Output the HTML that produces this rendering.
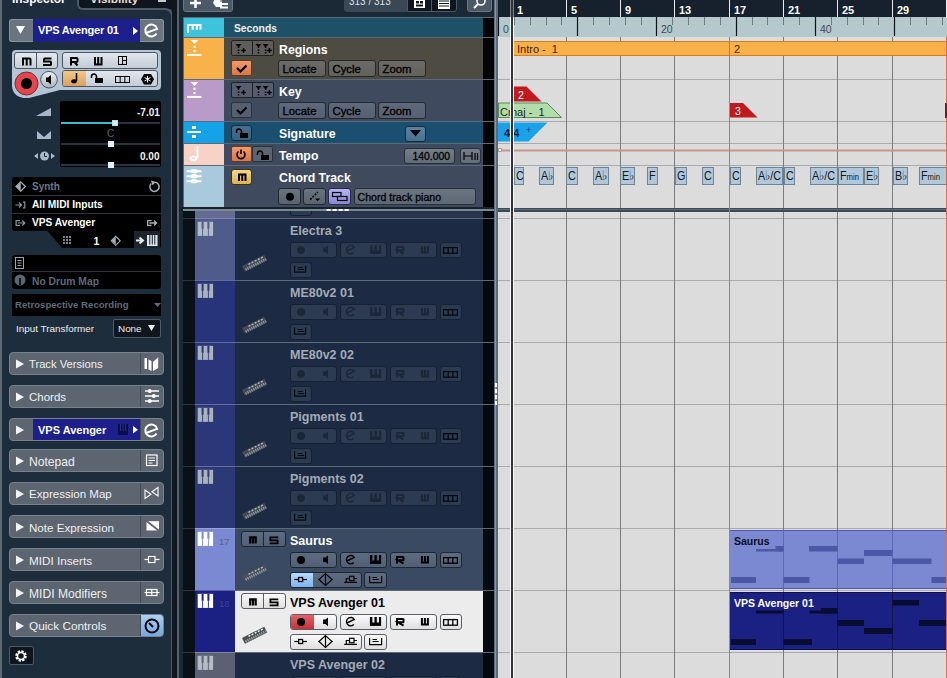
<!DOCTYPE html><html><head><meta charset="utf-8"><style>
html,body{margin:0;padding:0;width:947px;height:678px;overflow:hidden;background:#1e2d3c;font-family:"Liberation Sans",sans-serif;}
div{position:absolute;box-sizing:border-box;}
.t{white-space:nowrap;line-height:1;}
svg{position:absolute;overflow:visible}
</style></head><body>
<div style="left:0px;top:0px;width:172px;height:678px;background:#1e2d3c"></div>
<div style="left:0px;top:0px;width:2px;height:678px;background:#5b6671"></div>
<div class="t" style="left:12px;top:-6.5px;font-size:11.9px;color:#fff;font-weight:bold;">Inspector</div>
<div style="left:79px;top:0px;width:93px;height:9px;background:#0f151d"></div>
<div style="left:77px;top:-4px;width:20px;height:14px;background:#0f151d;border-left:2px solid #4e5a65;border-bottom:2px solid #4e5a65;border-bottom-left-radius:6px"></div>
<div class="t" style="left:90px;top:-6.5px;font-size:11.8px;color:#e8dcd0;font-weight:bold;">Visibility</div>
<div style="left:158px;top:0px;width:8px;height:2px;background:#c8ccd0"></div>
<div style="left:90px;top:8px;width:83px;height:680px;border-top:2px solid #4e5a65;border-right:2px solid #4e5a65;border-top-right-radius:8px"></div>
<div style="left:172px;top:0px;width:6px;height:678px;background:#0f1720"></div>
<div style="left:177px;top:0px;width:2px;height:678px;background:#56616c"></div>
<div style="left:9px;top:19px;width:25px;height:23px;background:#6b7580;border:1px solid #8a949e;border-right:0;border-radius:3px 0 0 3px"></div>
<svg style="left:16px;top:26px" width="10" height="9"><path d="M0 0H9L4.5 8Z" fill="#fff"/></svg>
<div style="left:33px;top:19px;width:107px;height:23px;background:#1c1f8c"></div>
<div class="t" style="left:38px;top:25px;font-size:11px;color:#fff;font-weight:bold;letter-spacing:-0.2px">VPS Avenger 01</div>
<svg style="left:133px;top:27px" width="6" height="8"><path d="M0 0L5 4L0 8Z" fill="#fff"/></svg>
<div style="left:140px;top:19px;width:24px;height:23px;background:#6b7580;border:1px solid #8a949e;border-left:0;border-radius:0 3px 3px 0"></div>
<svg style="left:0;top:0" width="172" height="50"><path d="M145.9 33 L157.1 28.9 A6 6 0 1 0 156.5 33.5" fill="none" stroke="#fff" stroke-width="2"/></svg>
<svg style="left:0;top:0" width="172" height="110"><path d="M16 50 H157 Q161 50 161 54 V86 Q161 90 157 90 H60 L29 98 Q13 99 12 86 V54 Q12 50 16 50Z" fill="#b5c5d5"/></svg>
<div style="left:14px;top:52px;width:44px;height:17px;background:linear-gradient(#e6eaf0,#c5ced8);border:1px solid #4d565e;border-radius:3px"></div>
<div style="left:36px;top:53px;width:1px;height:15px;background:#4d565e"></div>
<svg style="left:0;top:0" width="60" height="70"><path d="M23 65.5V58.5H29.5Q30.5 58.5 30.5 59.5V65.5M26.7 58.5V65.5" fill="none" stroke="#000" stroke-width="2"/><path d="M51.5 58.5H45Q44 58.5 44 59.5V61.5H50.5Q51 61.5 51 62.5V64.5Q51 65 50.5 65H43" fill="none" stroke="#000" stroke-width="2"/></svg>
<svg style="left:0;top:0" width="172" height="110"><circle cx="26.5" cy="83.5" r="11.5" fill="#e2474e" stroke="#7a2a30" stroke-width="1"/><circle cx="26.5" cy="83.5" r="5.5" fill="#000"/><defs><linearGradient id="gm" x1="0" y1="0" x2="0" y2="1"><stop offset="0" stop-color="#f0f2f5"/><stop offset="1" stop-color="#a8b2bc"/></linearGradient></defs><circle cx="49" cy="79.7" r="8.3" fill="url(#gm)" stroke="#4d565e" stroke-width="1"/><path d="M46 77.5H48L51 75V84.5L48 82H46Z" fill="#000"/></svg>
<div style="left:62px;top:52px;width:96px;height:17px;background:linear-gradient(#e2e7ee,#c3ccd7);border:1px solid #4d565e;border-radius:3px"></div>
<svg style="left:0;top:0" width="160" height="70"><path d="M71 65.5V58H76.5Q77.5 58 77.5 59V61Q77.5 62 76.5 62H71M74.5 62L77.5 65.5" fill="none" stroke="#000" stroke-width="2"/><path d="M95 57V64.5H101.5V57M98.2 57V64.5" fill="none" stroke="#000" stroke-width="2"/></svg>
<svg style="left:118px;top:56px" width="10" height="9"><rect x="0.5" y="0.5" width="8" height="8" fill="none" stroke="#000"/><path d="M4.5 0.5V8.5M4.5 4.5H8.5" stroke="#000"/></svg>
<div style="left:62px;top:70px;width:96px;height:17px;background:linear-gradient(#e2e7ee,#c3ccd7);border:1px solid #4d565e;border-radius:3px"></div>
<div style="left:63px;top:71px;width:23px;height:15px;background:linear-gradient(#f2c886,#dba060);border-radius:2px 0 0 2px"></div>
<svg style="left:70px;top:73px" width="9" height="11"><path d="M6.5 0V8" stroke="#000" stroke-width="1.5"/><ellipse cx="4" cy="8.3" rx="2.8" ry="2" fill="#000"/></svg>
<svg style="left:90px;top:73px" width="14" height="10"><path d="M1.5 5V3.5A2.5 2.5 0 0 1 6.5 3.5V5" fill="none" stroke="#000" stroke-width="1.5"/><rect x="5" y="5" width="8" height="5" fill="#000"/></svg>
<svg style="left:115px;top:76px" width="16" height="8"><rect x="0.5" y="0.5" width="14" height="6" fill="none" stroke="#000"/><path d="M5.2 0.5V6.5M9.8 0.5V6.5" stroke="#000"/></svg>
<svg style="left:141px;top:74px" width="14" height="11"><path d="M3 0H10L13 5.25L10 10.5H3L0 5.25Z" fill="#000"/><path d="M6.5 2V8.5M3.5 3.5L9.5 7M9.5 3.5L3.5 7" stroke="#fff" stroke-width="1"/></svg>
<svg style="left:0;top:0" width="60" height="170"><path d="M36 116H51V108Z" fill="#a8b8ca"/><path d="M37 131V139H51V131L44 137Z" fill="#a8b8ca"/><path d="M34 156L38 153V159Z" fill="#a8b8ca"/><circle cx="44.5" cy="156" r="4.5" fill="#a8b8ca"/><path d="M44.5 153V156.5H47" fill="none" stroke="#1e2d3c" stroke-width="1"/><path d="M55 156L51 153V159Z" fill="#a8b8ca"/></svg>
<div style="left:60px;top:101px;width:101px;height:66px;background:#000;border-radius:2px"></div>
<div style="left:61px;top:122px;width:99px;height:2px;background:#2a3440"></div>
<div style="left:61px;top:122px;width:53px;height:2px;background:#3fb8d4"></div>
<div style="left:112px;top:120px;width:6px;height:6px;background:#dff2f8;border:1px solid #b8e0ec"></div>
<div class="t" style="left:137px;top:108px;font-size:10px;color:#f4f0e8;font-weight:bold;">-7.01</div>
<div class="t" style="left:107px;top:129px;font-size:10px;color:#5a6570;font-weight:normal;">C</div>
<div style="left:61px;top:143px;width:99px;height:2px;background:#2a3440"></div>
<div style="left:108px;top:141px;width:6px;height:6px;background:#dff2f8"></div>
<div class="t" style="left:140px;top:152px;font-size:10px;color:#f4f0e8;font-weight:bold;">0.00</div>
<div style="left:61px;top:164px;width:99px;height:2px;background:#2a3440"></div>
<div style="left:108px;top:162px;width:6px;height:6px;background:#dff2f8"></div>
<div style="left:12px;top:177px;width:149px;height:54px;background:#000;border-radius:3px"></div>
<div style="left:12px;top:195px;width:149px;height:1px;background:#2b3540"></div>
<div style="left:12px;top:213px;width:149px;height:1px;background:#2b3540"></div>
<svg style="left:0;top:0" width="172" height="250"><path d="M47.5 231H161V246Q161 248 159 248H62Z" fill="#000"/><path d="M16 186.5L20.7 181.8L25.4 186.5L20.7 191.2Z" fill="none" stroke="#a8b0b8" stroke-width="1.2"/><path d="M16.5 186.5L20.7 182.3V190.7Z" fill="#a8b0b8"/><path d="M151.2 183.6A4.6 4.6 0 1 0 154.5 182.2" fill="none" stroke="#a8b0b8" stroke-width="1.5"/><path d="M151 180.5L155.5 182L152.5 185.5Z" fill="#a8b0b8"/></svg>
<div class="t" style="left:32px;top:182px;font-size:10px;color:#6a7888;font-weight:bold;">Synth</div>
<div class="t" style="left:32px;top:200px;font-size:10.2px;color:#fff;font-weight:bold;">All MIDI Inputs</div>
<div class="t" style="left:32px;top:218px;font-size:10.2px;color:#fff;font-weight:bold;">VPS Avenger</div>
<svg style="left:0;top:0" width="172" height="250"><path d="M15.5 205H21.5M19 202.5L21.5 205L19 207.5M23 202.2H24.8V207.8H23" fill="none" stroke="#8a949e" stroke-width="1.2"/><path d="M20 220.6H16.1V225.4H20M17.8 223H24.8M22.3 220.5L24.8 223L22.3 225.5" fill="none" stroke="#8a949e" stroke-width="1.2"/><path d="M151.6 220.6H147.7V225.4H151.6M149.4 223H156.6M154.1 220.5L156.6 223L154.1 225.5" fill="none" stroke="#a8b0b8" stroke-width="1.3"/><path d="M63 236h2v2h-2zM66 236h2v2h-2zM69 236h2v2h-2zM63 239h2v2h-2zM66 239h2v2h-2zM69 239h2v2h-2zM63 242h2v2h-2zM66 242h2v2h-2zM69 242h2v2h-2z" fill="#7a848e"/><path d="M111.2 240.8L115.7 236.3L120.2 240.8L115.7 245.3Z" fill="none" stroke="#a8b0b8" stroke-width="1.1"/><path d="M111.8 240.8L115.7 236.9V244.7Z" fill="#a8b0b8"/></svg>
<div style="left:134px;top:231px;width:26px;height:17px;background:#1c242c"></div>
<div class="t" style="left:93.5px;top:235.5px;font-size:10.5px;color:#fff;font-weight:bold;">1</div>
<svg style="left:0;top:0" width="172" height="250"><path d="M136 240.5H141.5M139.5 237.5L143 240.5L139.5 243.5" fill="none" stroke="#e0e6ec" stroke-width="2"/><rect x="147" y="235" width="10.5" height="11" fill="#e0e6ec"/><path d="M149.8 235V244.5M152.3 235V244.5M154.8 235V244.5" stroke="#1c242c" stroke-width="1"/></svg>
<div style="left:12px;top:255px;width:149px;height:34px;background:#000;border-radius:3px"></div>
<div style="left:12px;top:271px;width:149px;height:1px;background:#2b3540"></div>
<svg style="left:14px;top:257px" width="12" height="13"><rect x="1.5" y="0.5" width="8" height="11" fill="none" stroke="#9aa4ae"/><path d="M3.5 3.5H7.5M3.5 6H7.5M3.5 8.5H7.5" stroke="#9aa4ae"/></svg>
<svg style="left:14px;top:274px" width="12" height="12"><circle cx="6" cy="6" r="5.5" fill="#5a6670"/><path d="M6 4V11" stroke="#000" stroke-width="1.5"/></svg>
<div class="t" style="left:32px;top:277px;font-size:10.3px;color:#5a6a7e;font-weight:bold;">No Drum Map</div>
<div style="left:12px;top:294px;width:149px;height:22px;background:#000"></div>
<div class="t" style="left:15px;top:300px;font-size:9.6px;color:#5f6b78;font-weight:bold;">Retrospective Recording</div>
<svg style="left:154px;top:303px" width="8" height="5"><path d="M0 0H7L3.5 4Z" fill="#5f6b78"/></svg>
<div class="t" style="left:16px;top:324px;font-size:9.9px;color:#f0f0f0;font-weight:normal;">Input Transformer</div>
<div style="left:113px;top:319px;width:48px;height:19px;background:#10161e;border:1px solid #4e5a66;border-radius:2px"></div>
<div class="t" style="left:118px;top:324px;font-size:9.9px;color:#f0f0f0;font-weight:normal;">None</div>
<svg style="left:148px;top:325px" width="8" height="7"><path d="M0 0H7L3.5 6Z" fill="#f0f0f0"/></svg>
<div style="left:9px;top:352px;width:155px;height:23px;background:#5c6570;border:1px solid #77828c;border-radius:4px"></div>
<div style="left:140px;top:353px;width:1px;height:21px;background:#434b55"></div>
<svg style="left:16px;top:359px" width="9" height="10"><path d="M0 0.5L8 5L0 9.5Z" fill="#f4f4f4"/></svg>
<div class="t" style="left:29px;top:358.7px;font-size:11.2px;color:#eef0f2;font-weight:normal;">Track Versions</div>
<div style="left:9px;top:385px;width:155px;height:23px;background:#5c6570;border:1px solid #77828c;border-radius:4px"></div>
<div style="left:140px;top:386px;width:1px;height:21px;background:#434b55"></div>
<svg style="left:16px;top:392px" width="9" height="10"><path d="M0 0.5L8 5L0 9.5Z" fill="#f4f4f4"/></svg>
<div class="t" style="left:29px;top:391.7px;font-size:11.5px;color:#eef0f2;font-weight:normal;">Chords</div>
<div style="left:9px;top:418px;width:155px;height:23px;background:#5c6570;border:1px solid #77828c;border-radius:4px"></div>
<div style="left:140px;top:419px;width:1px;height:21px;background:#434b55"></div>
<svg style="left:16px;top:425px" width="9" height="10"><path d="M0 0.5L8 5L0 9.5Z" fill="#f4f4f4"/></svg>
<div style="left:33px;top:419px;width:107px;height:21px;background:#1c1f8c"></div>
<div class="t" style="left:38px;top:425px;font-size:11px;color:#fff;font-weight:bold;">VPS Avenger</div>
<svg style="left:118px;top:424px" width="12" height="12"><rect x="0" y="0" width="10" height="11" fill="#0a0d48"/><path d="M2.5 0V7M5 0V7M7.5 0V7" stroke="#28308a" stroke-width="1"/></svg>
<svg style="left:133px;top:426px" width="6" height="9"><path d="M0 0L5 3.7L0 7.4Z" fill="#fff"/></svg>
<div style="left:9px;top:449px;width:155px;height:23px;background:#5c6570;border:1px solid #77828c;border-radius:4px"></div>
<div style="left:140px;top:450px;width:1px;height:21px;background:#434b55"></div>
<svg style="left:16px;top:456px" width="9" height="10"><path d="M0 0.5L8 5L0 9.5Z" fill="#f4f4f4"/></svg>
<div class="t" style="left:29px;top:455.7px;font-size:12.1px;color:#eef0f2;font-weight:normal;">Notepad</div>
<div style="left:9px;top:482px;width:155px;height:23px;background:#5c6570;border:1px solid #77828c;border-radius:4px"></div>
<div style="left:140px;top:483px;width:1px;height:21px;background:#434b55"></div>
<svg style="left:16px;top:489px" width="9" height="10"><path d="M0 0.5L8 5L0 9.5Z" fill="#f4f4f4"/></svg>
<div class="t" style="left:29px;top:488.7px;font-size:11.55px;color:#eef0f2;font-weight:normal;">Expression Map</div>
<div style="left:9px;top:515px;width:155px;height:23px;background:#5c6570;border:1px solid #77828c;border-radius:4px"></div>
<div style="left:140px;top:516px;width:1px;height:21px;background:#434b55"></div>
<svg style="left:16px;top:522px" width="9" height="10"><path d="M0 0.5L8 5L0 9.5Z" fill="#f4f4f4"/></svg>
<div class="t" style="left:29px;top:521.7px;font-size:11.6px;color:#eef0f2;font-weight:normal;">Note Expression</div>
<div style="left:9px;top:548px;width:155px;height:23px;background:#5c6570;border:1px solid #77828c;border-radius:4px"></div>
<div style="left:140px;top:549px;width:1px;height:21px;background:#434b55"></div>
<svg style="left:16px;top:555px" width="9" height="10"><path d="M0 0.5L8 5L0 9.5Z" fill="#f4f4f4"/></svg>
<div class="t" style="left:29px;top:554.7px;font-size:11.7px;color:#eef0f2;font-weight:normal;">MIDI Inserts</div>
<div style="left:9px;top:581px;width:155px;height:23px;background:#5c6570;border:1px solid #77828c;border-radius:4px"></div>
<div style="left:140px;top:582px;width:1px;height:21px;background:#434b55"></div>
<svg style="left:16px;top:588px" width="9" height="10"><path d="M0 0.5L8 5L0 9.5Z" fill="#f4f4f4"/></svg>
<div class="t" style="left:29px;top:587.7px;font-size:12.1px;color:#eef0f2;font-weight:normal;">MIDI Modifiers</div>
<div style="left:9px;top:614px;width:155px;height:23px;background:#5c6570;border:1px solid #77828c;border-radius:4px"></div>
<div style="left:140px;top:615px;width:1px;height:21px;background:#434b55"></div>
<svg style="left:16px;top:621px" width="9" height="10"><path d="M0 0.5L8 5L0 9.5Z" fill="#f4f4f4"/></svg>
<div class="t" style="left:29px;top:620.7px;font-size:11.8px;color:#eef0f2;font-weight:normal;">Quick Controls</div>
<svg style="left:0;top:0" width="172" height="678"><path d="M144.5 358H147V369H144.5ZM148.5 359.5L151.5 361V371L148.5 369.5ZM153 362L158.2 357.2V368L153 371Z" fill="#fff"/><path d="M145 391H159M145 396H159M145 401H159" stroke="#fff" stroke-width="1.3"/><rect x="148" y="389" width="3.5" height="4" rx="1.5" fill="#fff"/><rect x="152" y="394" width="3.5" height="4" rx="1.5" fill="#fff"/><rect x="148" y="399" width="3.5" height="4" rx="1.5" fill="#fff"/><rect x="146.5" y="455" width="10.5" height="10.5" fill="none" stroke="#fff" stroke-width="1.2"/><path d="M148.5 458H155M148.5 460.5H155M148.5 463H152.5" stroke="#fff"/><path d="M145 490L151 494.2L145 498.4ZM158 487.5L152 491.7L158 495.9Z" fill="none" stroke="#fff" stroke-width="1.1"/><path d="M146.5 521.2H159V530.5H146.5Z" fill="#fff"/><path d="M146 520.5L159.5 531.2" stroke="#5c6570" stroke-width="1.8"/><path d="M144.5 559.5H159.5" stroke="#fff" stroke-width="1.2"/><rect x="148.5" y="556.5" width="6.5" height="6" fill="#5c6570" stroke="#fff" stroke-width="1.2"/><path d="M144.5 592.5H159.5" stroke="#fff" stroke-width="1.2"/><rect x="146.5" y="589.5" width="10.5" height="6" fill="none" stroke="#fff" stroke-width="1.2"/><path d="M151.75 589.5V595.5" stroke="#fff" stroke-width="1.2"/></svg>
<svg style="left:0;top:400px" width="172" height="50"><path d="M145.9 33 L157.1 28.9 A6 6 0 1 0 156.5 33.5" fill="none" stroke="#fff" stroke-width="2"/></svg>
<div style="left:141px;top:615px;width:22px;height:21px;background:linear-gradient(#a8d0f8,#78a8e0);border-radius:0 3px 3px 0"></div>
<svg style="left:143px;top:617px" width="18" height="18"><circle cx="9" cy="9" r="6.5" fill="none" stroke="#000" stroke-width="2"/><path d="M6 6L10 10" stroke="#000" stroke-width="2"/></svg>
<div style="left:9px;top:646px;width:25px;height:19px;background:#0f151d;border:1px solid #4e5a66;border-radius:2px"></div>
<svg style="left:14px;top:649px" width="14" height="14"><circle cx="7" cy="7" r="4.5" fill="none" stroke="#fff" stroke-width="2.5" stroke-dasharray="2.2 1.3"/><circle cx="7" cy="7" r="3.5" fill="none" stroke="#fff" stroke-width="1.5"/><circle cx="7" cy="7" r="1.3" fill="#0f151d"/></svg>
<div style="left:179px;top:0px;width:316px;height:678px;background:#1b2836"></div>
<div style="left:183px;top:-3px;width:50px;height:15px;background:#4b5867;border:1px solid #6a7682;border-radius:3px"></div>
<svg style="left:190px;top:0px" width="12" height="9"><path d="M5.5 -2V8M0 3H11" stroke="#fff" stroke-width="2.6"/></svg>
<svg style="left:213px;top:0px" width="17" height="9"><path d="M2 -2H7L9 1V7H3L0 3Z" fill="#fff"/><path d="M7 4H15M7 7.5H15" stroke="#fff" stroke-width="1.8"/><path d="M7 1H15" stroke="#4b5867" stroke-width="1"/></svg>
<div style="left:344px;top:-3px;width:63px;height:15px;background:#3a4856;border-radius:3px 0 0 3px"></div>
<div class="t" style="left:349px;top:-3px;font-size:10px;color:#d8e0e8;font-weight:normal;">313 / 313</div>
<div style="left:407px;top:-3px;width:50px;height:15px;background:#0f151d;border:1px solid #4b5867;border-radius:0 3px 3px 0"></div>
<div style="left:431px;top:-3px;width:1px;height:15px;background:#4b5867"></div>
<svg style="left:413px;top:-2px" width="13" height="12"><rect x="1" y="1" width="11" height="9" fill="#fff"/><rect x="3" y="3" width="3" height="2.5" fill="#0f151d"/><rect x="7" y="3" width="3" height="2.5" fill="#0f151d"/><rect x="3" y="6.5" width="7" height="2" fill="#0f151d"/></svg>
<svg style="left:437px;top:-2px" width="14" height="12"><rect x="1" y="0" width="12" height="11" fill="#fff"/><path d="M2 3H12M2 5.5H12M2 8H12" stroke="#0f151d" stroke-width="1"/></svg>
<div style="left:467px;top:-3px;width:25px;height:15px;background:#4b5867;border:1px solid #6a7682;border-radius:3px"></div>
<svg style="left:473px;top:-3px" width="14" height="14"><circle cx="8" cy="4" r="4" fill="none" stroke="#fff" stroke-width="1.6"/><path d="M5 7L1 11" stroke="#fff" stroke-width="2"/></svg>
<div style="left:183px;top:17px;width:312px;height:192px;background:#5c6a77"></div>
<div style="left:184px;top:18px;width:40px;height:19px;background:#3fc3dc"></div>
<div style="left:224px;top:18px;width:259px;height:19px;background:#1e5068"></div>
<div style="left:483px;top:18px;width:11px;height:19px;background:#020406"></div>
<div style="left:184px;top:38px;width:40px;height:41px;background:#f9b24a"></div>
<div style="left:224px;top:38px;width:259px;height:41px;background:#4d4b42"></div>
<div style="left:483px;top:38px;width:11px;height:41px;background:#020406"></div>
<div style="left:184px;top:80px;width:40px;height:41px;background:#b99bc9"></div>
<div style="left:224px;top:80px;width:259px;height:41px;background:#3f4a5e"></div>
<div style="left:483px;top:80px;width:11px;height:41px;background:#020406"></div>
<div style="left:184px;top:122px;width:40px;height:21px;background:#14a3e6"></div>
<div style="left:224px;top:122px;width:259px;height:21px;background:#1b4f70"></div>
<div style="left:483px;top:122px;width:11px;height:21px;background:#020406"></div>
<div style="left:184px;top:144px;width:40px;height:21px;background:#f8d2c6"></div>
<div style="left:224px;top:144px;width:259px;height:21px;background:#3f4a5e"></div>
<div style="left:483px;top:144px;width:11px;height:21px;background:#020406"></div>
<div style="left:184px;top:166px;width:40px;height:41px;background:#a9c9dc"></div>
<div style="left:224px;top:166px;width:259px;height:41px;background:#3f4a5e"></div>
<div style="left:483px;top:166px;width:11px;height:41px;background:#020406"></div>
<div class="t" style="left:234px;top:24px;font-size:10.3px;color:#f0f0f0;font-weight:bold;">Seconds</div>
<div class="t" style="left:279px;top:44px;font-size:12.3px;color:#fff;font-weight:bold;">Regions</div>
<div class="t" style="left:279px;top:86px;font-size:12.3px;color:#fff;font-weight:bold;">Key</div>
<div class="t" style="left:279px;top:128px;font-size:12.3px;color:#fff;font-weight:bold;">Signature</div>
<div class="t" style="left:279px;top:150px;font-size:12.3px;color:#fff;font-weight:bold;">Tempo</div>
<div class="t" style="left:279px;top:172px;font-size:12.3px;color:#fff;font-weight:bold;">Chord Track</div>
<svg style="left:0;top:0" width="500" height="210"><path d="M187 25H201.5M188 24V33M192.7 24V29.8M196.8 24V29.8M200.5 24V29.8" stroke="#fff" stroke-width="2" fill="none"/><path d="M190.7 40H198.3L194.5 44Z" fill="#fff"/><rect x="193.4" y="45.7" width="2.2" height="2.2" fill="#fff"/><rect x="193.4" y="50" width="2.2" height="2.2" fill="#fff"/><path d="M187 54.9H201.4" stroke="#fff" stroke-width="2"/><path d="M190.7 82H198.3L194.5 86Z" fill="#fff"/><rect x="193.4" y="87.7" width="2.2" height="2.2" fill="#fff"/><rect x="193.4" y="92" width="2.2" height="2.2" fill="#fff"/><path d="M187 96.9H201.4" stroke="#fff" stroke-width="2"/><path d="M187 132H201" stroke="#fff" stroke-width="2"/><rect x="192" y="126" width="4" height="3" fill="#fff"/><rect x="192" y="135" width="4" height="3" fill="#fff"/><path d="M197.5 146V158" stroke="#fff" stroke-width="1.8"/><ellipse cx="193.5" cy="158.5" rx="3.8" ry="2.8" fill="#fff"/><ellipse cx="193.5" cy="158.3" rx="1.8" ry="1.2" fill="#f8e0d8"/><path d="M186.5 171.2H201.5M186.5 176.3H201.5M186.5 181.3H201.5" stroke="#fff" stroke-width="2"/><ellipse cx="194" cy="171.2" rx="3.5" ry="2.2" fill="#fff"/><ellipse cx="194" cy="176.3" rx="3.5" ry="2.2" fill="#fff"/><ellipse cx="194" cy="181.3" rx="3.5" ry="2.2" fill="#fff"/></svg>
<div style="left:231px;top:40px;width:43px;height:16px;background:#5e5d58;border:1px solid #1e2226;border-radius:2px;"></div>
<div style="left:252px;top:41px;width:1px;height:14px;background:#1e2226"></div>
<svg style="left:0;top:0px" width="280" height="60"><path d="M235.5 44H241.5L239.3 46.5V48H237.7V46.5Z" fill="#000"/><rect x="237.7" y="49.5" width="1.6" height="1.4" fill="#000"/><rect x="237.7" y="52" width="1.6" height="1.4" fill="#000"/><path d="M241.2 50.5H246.0M243.6 48.0V53.0" stroke="#000" stroke-width="1.4"/><path d="M255.5 44H261.5L259.3 46.5V48H257.7V46.5Z" fill="#000"/><rect x="257.7" y="49.5" width="1.6" height="1.4" fill="#000"/><rect x="257.7" y="52" width="1.6" height="1.4" fill="#000"/><path d="M262.6 44H268.6L266.40000000000003 46.5V48H264.8V46.5Z" fill="#000"/><rect x="264.8" y="49.5" width="1.6" height="1.4" fill="#000"/><rect x="264.8" y="52" width="1.6" height="1.4" fill="#000"/><path d="M267 50.5H271.8M269.4 48.0V53.0" stroke="#000" stroke-width="1.4"/></svg>
<div style="left:231px;top:82px;width:43px;height:16px;background:#555f70;border:1px solid #1e2226;border-radius:2px;"></div>
<div style="left:252px;top:83px;width:1px;height:14px;background:#1e2226"></div>
<svg style="left:0;top:42px" width="280" height="60"><path d="M235.5 44H241.5L239.3 46.5V48H237.7V46.5Z" fill="#000"/><rect x="237.7" y="49.5" width="1.6" height="1.4" fill="#000"/><rect x="237.7" y="52" width="1.6" height="1.4" fill="#000"/><path d="M241.2 50.5H246.0M243.6 48.0V53.0" stroke="#000" stroke-width="1.4"/><path d="M255.5 44H261.5L259.3 46.5V48H257.7V46.5Z" fill="#000"/><rect x="257.7" y="49.5" width="1.6" height="1.4" fill="#000"/><rect x="257.7" y="52" width="1.6" height="1.4" fill="#000"/><path d="M262.6 44H268.6L266.40000000000003 46.5V48H264.8V46.5Z" fill="#000"/><rect x="264.8" y="49.5" width="1.6" height="1.4" fill="#000"/><rect x="264.8" y="52" width="1.6" height="1.4" fill="#000"/><path d="M267 50.5H271.8M269.4 48.0V53.0" stroke="#000" stroke-width="1.4"/></svg>
<div style="left:231px;top:60px;width:21px;height:16px;background:linear-gradient(#f29a6c,#d8784a);border:1px solid #6a3a20;border-radius:2px;"></div>
<div style="left:231px;top:102px;width:21px;height:16px;background:#555f70;border:1px solid #2a323a;border-radius:2px;"></div>
<svg style="left:236px;top:64px" width="12" height="9"><path d="M1 4L4.5 7.5L10.5 1.5" fill="none" stroke="#000" stroke-width="2.2"/></svg>
<svg style="left:236px;top:106px" width="12" height="9"><path d="M1 4L4.5 7.5L10.5 1.5" fill="none" stroke="#000" stroke-width="2.2"/></svg>
<div style="left:278px;top:60px;width:48px;height:17px;background:linear-gradient(#6c6b65,#62615b);border:1px solid #25282c;border-radius:2px;border-radius:3px"></div>
<div class="t" style="left:282.5px;top:64px;font-size:11.3px;color:#000;font-weight:normal;-webkit-text-stroke:0.35px #000">Locate</div>
<div style="left:328px;top:60px;width:48px;height:17px;background:linear-gradient(#6c6b65,#62615b);border:1px solid #25282c;border-radius:2px;border-radius:3px"></div>
<div class="t" style="left:332.5px;top:64px;font-size:11.3px;color:#000;font-weight:normal;-webkit-text-stroke:0.35px #000">Cycle</div>
<div style="left:378px;top:60px;width:48px;height:17px;background:linear-gradient(#6c6b65,#62615b);border:1px solid #25282c;border-radius:2px;border-radius:3px"></div>
<div class="t" style="left:382.5px;top:64px;font-size:11.3px;color:#000;font-weight:normal;-webkit-text-stroke:0.35px #000">Zoom</div>
<div style="left:278px;top:102px;width:48px;height:17px;background:linear-gradient(#5f697c,#566072);border:1px solid #25282c;border-radius:2px;border-radius:3px"></div>
<div class="t" style="left:282.5px;top:106px;font-size:11.3px;color:#000;font-weight:normal;-webkit-text-stroke:0.35px #000">Locate</div>
<div style="left:328px;top:102px;width:48px;height:17px;background:linear-gradient(#5f697c,#566072);border:1px solid #25282c;border-radius:2px;border-radius:3px"></div>
<div class="t" style="left:332.5px;top:106px;font-size:11.3px;color:#000;font-weight:normal;-webkit-text-stroke:0.35px #000">Cycle</div>
<div style="left:378px;top:102px;width:48px;height:17px;background:linear-gradient(#5f697c,#566072);border:1px solid #25282c;border-radius:2px;border-radius:3px"></div>
<div class="t" style="left:382.5px;top:106px;font-size:11.3px;color:#000;font-weight:normal;-webkit-text-stroke:0.35px #000">Zoom</div>
<div style="left:231px;top:125px;width:21px;height:16px;background:linear-gradient(#46708e,#3a6282);border:1px solid #1a2c3a;border-radius:2px;border-radius:3px"></div>
<svg style="left:235px;top:128px" width="14" height="10"><path d="M1.5 5V3.5A2.5 2.5 0 0 1 6.5 3.5V5" fill="none" stroke="#000" stroke-width="1.5"/><rect x="5" y="5" width="8" height="5" fill="#000"/></svg>
<div style="left:405px;top:126px;width:21px;height:16px;background:linear-gradient(#5a84a4,#48708e);border:1px solid #1a2c3a;border-radius:2px;border-radius:3px"></div>
<svg style="left:410px;top:130px" width="11" height="7"><path d="M0 0H11L5.5 6.5Z" fill="#000"/></svg>
<div style="left:231px;top:146px;width:21px;height:16px;background:linear-gradient(#f29a6c,#d8784a);border:1px solid #6a3a20;border-radius:2px;"></div>
<svg style="left:235px;top:148px" width="12" height="12"><path d="M3.5 3.5A4 4 0 1 0 8.5 3.5" fill="none" stroke="#000" stroke-width="1.6"/><path d="M6 1.5V6" stroke="#000" stroke-width="1.6"/></svg>
<div style="left:252px;top:146px;width:21px;height:16px;background:#5b6470;border:1px solid #2a323a;border-radius:2px;"></div>
<svg style="left:256px;top:150px" width="14" height="10"><path d="M1.5 5V3.5A2.5 2.5 0 0 1 6.5 3.5V5" fill="none" stroke="#000" stroke-width="1.5"/><rect x="5" y="5" width="8" height="5" fill="#000"/></svg>
<div style="left:404px;top:148px;width:51px;height:16px;background:linear-gradient(#747e8a,#626c78);border:1px solid #2a3038;border-radius:2px;border-radius:3px"></div>
<div class="t" style="left:412.5px;top:151.5px;font-size:10.4px;color:#000;font-weight:normal;-webkit-text-stroke:0.3px #000">140.000</div>
<div style="left:460px;top:148px;width:21px;height:16px;background:linear-gradient(#747e8a,#626c78);border:1px solid #2a3038;border-radius:2px;border-radius:3px"></div>
<svg style="left:463px;top:151px" width="16" height="10"><path d="M1 1V9M1 5H9M9 1V9M12 2V9M14.5 2V9" stroke="#000" stroke-width="1.2"/></svg>
<div style="left:231px;top:169px;width:21px;height:16px;background:linear-gradient(#f4d880,#dcb450);border:1px solid #3a3420;border-radius:2px;border-radius:3px"></div>
<svg style="left:0;top:0" width="260" height="200"><path d="M239 181V174.5H245.5V181M242.25 174.5V181" fill="none" stroke="#000" stroke-width="2"/></svg>
<div style="left:278px;top:188px;width:23px;height:17px;background:linear-gradient(#6a7480,#5a6470);border:1px solid #22282e;border-radius:2px;border-radius:3px"></div>
<div style="left:303px;top:188px;width:23px;height:17px;background:linear-gradient(#6a7480,#5a6470);border:1px solid #22282e;border-radius:2px;border-radius:3px"></div>
<div style="left:328px;top:188px;width:23px;height:17px;background:linear-gradient(#b4b4f0,#8888d4);border:1px solid #2a2a50;border-radius:2px;border-radius:3px"></div>
<svg style="left:0;top:0" width="360" height="210"><circle cx="290" cy="196.8" r="4" fill="#000"/><path d="M310.2 199.6L317.8 192" stroke="#000" stroke-width="1.6" stroke-dasharray="2 1.2"/><path d="M315 198.4H320.2L317.6 201Z" fill="#000"/><rect x="332.5" y="192.5" width="8.5" height="4" fill="none" stroke="#000" stroke-width="1.2"/><rect x="337.5" y="196.5" width="9.5" height="4" fill="none" stroke="#000" stroke-width="1.2"/></svg>
<div style="left:354px;top:188px;width:122px;height:17px;background:linear-gradient(#6c7682,#5e6874);border:1px solid #2a3038;border-radius:2px;border-radius:3px"></div>
<div class="t" style="left:357.5px;top:192px;font-size:10.6px;color:#000;font-weight:normal;-webkit-text-stroke:0.3px #000">Chord track piano</div>
<div style="left:179px;top:207px;width:316px;height:4px;background:#18222c"></div>
<div style="left:183px;top:209px;width:312px;height:2px;background:#7a8894"></div>
<svg style="left:326px;top:208px" width="24" height="4"><path d="M0.5 2H23" stroke="#fff" stroke-width="2" stroke-dasharray="4.2 1.8"/></svg>
<div style="left:179px;top:211px;width:316px;height:467px;overflow:hidden">
<div style="left:4px;top:-55px;width:12px;height:62px;background:#0a1018"></div>
<div style="left:4px;top:-55px;width:12px;height:1px;background:#2c3642"></div>
<div style="left:16px;top:-55px;width:40px;height:62px;background:#646a92"></div>
<div style="left:16px;top:-55px;width:40px;height:1px;background:rgba(200,210,230,0.35)"></div>
<div style="left:56px;top:-55px;width:259px;height:1px;background:#5c6a77"></div>
<div style="left:56px;top:-54px;width:248px;height:61px;background:#28354c"></div>
<div style="left:304px;top:-54px;width:11px;height:61px;background:#050a10"></div>
<svg style="left:-179px;top:-55px" width="500" height="64"><rect x="197.7" y="3.8" width="15.4" height="14.1" fill="#b4bcc6"/><rect x="201.6" y="3.8" width="2" height="7" fill="#646a92"/><rect x="207.4" y="3.8" width="2" height="7" fill="#646a92"/><path d="M202.6 10.8V17.9M208.4 10.8V17.9" stroke="#646a92" stroke-width="0.9"/></svg>
<svg style="left:-179px;top:-55px" width="500" height="64"><g transform="translate(254.5 45) rotate(-27)" opacity="0.85"><rect x="-12.5" y="-3" width="25" height="6.5" fill="#4a5058"/><path d="M-11 1.8H12" stroke="#a4a8ae" stroke-width="2.6" stroke-dasharray="1.3 0.9"/><path d="M-6 -1.5H11" stroke="#d0d4d8" stroke-width="1.4" stroke-dasharray="2 1.5"/></g></svg>
<div class="t" style="left:111px;top:-48px;font-size:12.5px;color:#a4abb4;font-weight:bold;">Electra 2</div>
<div style="left:111px;top:-31px;width:47px;height:16px;background:#2d3b52;border:1px solid #152030;border-radius:3px"></div>
<div style="left:161px;top:-31px;width:47px;height:16px;background:#2d3b52;border:1px solid #152030;border-radius:3px"></div>
<div style="left:211px;top:-31px;width:47px;height:16px;background:#2d3b52;border:1px solid #152030;border-radius:3px"></div>
<div style="left:261px;top:-31px;width:22px;height:16px;background:#2d3b52;border:1px solid #152030;border-radius:3px"></div>
<svg style="left:-179px;top:-55px" width="500" height="64"><circle cx="301" cy="31.9" r="4" fill="#1b2638"/><path d="M323.1 29.6H325.4L328 27.6V36.2L325.4 34.1H323.1Z" fill="#1b2638"/><path d="M346.8 33L354.3 29.5A4.2 4.2 0 1 0 353.8 34.5" fill="none" stroke="#1b2638" stroke-width="1.4"/><rect x="369.9" y="27" width="11.2" height="8.9" fill="#1b2638"/><rect x="372.3" y="27" width="2.2" height="5.5" fill="#2d3b52"/><rect x="376.8" y="27" width="2.2" height="5.5" fill="#2d3b52"/><path d="M397 35.6V29H403Q403.5 29 403.5 29.5V31.8Q403.5 32.3 403 32.3H398L403.5 35.6" fill="none" stroke="#1b2638" stroke-width="2"/><path d="M421.9 28V34.6H427.9V28M424.9 28V34.6" fill="none" stroke="#1b2638" stroke-width="2"/><rect x="443.6" y="29.6" width="13.8" height="5.6" fill="none" stroke="#060a12" stroke-width="1.3"/><path d="M448.2 29.6V35.2M452.8 29.6V35.2" stroke="#060a12" stroke-width="1.3"/></svg>
<div style="left:111px;top:-11px;width:22px;height:16px;background:#2d3b52;border:1px solid #152030;border-radius:3px"></div>
<svg style="left:-179px;top:-55px" width="500" height="64"><path d="M294.6 48V54.6H305.6V48" fill="none" stroke="#060a12" stroke-width="1.2" transform="translate(0 -0.5)"/><path d="M297.8 49.5H302.6M297.8 51.5H304.3" stroke="#060a12" stroke-width="1.2"/></svg>
<div style="left:4px;top:7px;width:12px;height:62px;background:#0a1018"></div>
<div style="left:4px;top:7px;width:12px;height:1px;background:#2c3642"></div>
<div style="left:16px;top:7px;width:40px;height:62px;background:#4f5b8a"></div>
<div style="left:16px;top:7px;width:40px;height:1px;background:rgba(200,210,230,0.35)"></div>
<div style="left:56px;top:7px;width:259px;height:1px;background:#5c6a77"></div>
<div style="left:56px;top:8px;width:248px;height:61px;background:#1c2a43"></div>
<div style="left:304px;top:8px;width:11px;height:61px;background:#050a10"></div>
<svg style="left:-179px;top:7px" width="500" height="64"><rect x="197.7" y="3.8" width="15.4" height="14.1" fill="#b4bcc6"/><rect x="201.6" y="3.8" width="2" height="7" fill="#4f5b8a"/><rect x="207.4" y="3.8" width="2" height="7" fill="#4f5b8a"/><path d="M202.6 10.8V17.9M208.4 10.8V17.9" stroke="#4f5b8a" stroke-width="0.9"/></svg>
<svg style="left:-179px;top:7px" width="500" height="64"><g transform="translate(254.5 45) rotate(-27)" opacity="0.85"><rect x="-12.5" y="-3" width="25" height="6.5" fill="#4a5058"/><path d="M-11 1.8H12" stroke="#a4a8ae" stroke-width="2.6" stroke-dasharray="1.3 0.9"/><path d="M-6 -1.5H11" stroke="#d0d4d8" stroke-width="1.4" stroke-dasharray="2 1.5"/></g></svg>
<div class="t" style="left:111px;top:14px;font-size:12.5px;color:#a4abb4;font-weight:bold;">Electra 3</div>
<div style="left:111px;top:31px;width:47px;height:16px;background:#2d3b52;border:1px solid #152030;border-radius:3px"></div>
<div style="left:161px;top:31px;width:47px;height:16px;background:#2d3b52;border:1px solid #152030;border-radius:3px"></div>
<div style="left:211px;top:31px;width:47px;height:16px;background:#2d3b52;border:1px solid #152030;border-radius:3px"></div>
<div style="left:261px;top:31px;width:22px;height:16px;background:#2d3b52;border:1px solid #152030;border-radius:3px"></div>
<svg style="left:-179px;top:7px" width="500" height="64"><circle cx="301" cy="31.9" r="4" fill="#1b2638"/><path d="M323.1 29.6H325.4L328 27.6V36.2L325.4 34.1H323.1Z" fill="#1b2638"/><path d="M346.8 33L354.3 29.5A4.2 4.2 0 1 0 353.8 34.5" fill="none" stroke="#1b2638" stroke-width="1.4"/><rect x="369.9" y="27" width="11.2" height="8.9" fill="#1b2638"/><rect x="372.3" y="27" width="2.2" height="5.5" fill="#2d3b52"/><rect x="376.8" y="27" width="2.2" height="5.5" fill="#2d3b52"/><path d="M397 35.6V29H403Q403.5 29 403.5 29.5V31.8Q403.5 32.3 403 32.3H398L403.5 35.6" fill="none" stroke="#1b2638" stroke-width="2"/><path d="M421.9 28V34.6H427.9V28M424.9 28V34.6" fill="none" stroke="#1b2638" stroke-width="2"/><rect x="443.6" y="29.6" width="13.8" height="5.6" fill="none" stroke="#060a12" stroke-width="1.3"/><path d="M448.2 29.6V35.2M452.8 29.6V35.2" stroke="#060a12" stroke-width="1.3"/></svg>
<div style="left:111px;top:51px;width:22px;height:16px;background:#2d3b52;border:1px solid #152030;border-radius:3px"></div>
<svg style="left:-179px;top:7px" width="500" height="64"><path d="M294.6 48V54.6H305.6V48" fill="none" stroke="#060a12" stroke-width="1.2" transform="translate(0 -0.5)"/><path d="M297.8 49.5H302.6M297.8 51.5H304.3" stroke="#060a12" stroke-width="1.2"/></svg>
<div style="left:4px;top:69px;width:12px;height:62px;background:#0a1018"></div>
<div style="left:4px;top:69px;width:12px;height:1px;background:#2c3642"></div>
<div style="left:16px;top:69px;width:40px;height:62px;background:#28347a"></div>
<div style="left:16px;top:69px;width:40px;height:1px;background:rgba(200,210,230,0.35)"></div>
<div style="left:56px;top:69px;width:259px;height:1px;background:#5c6a77"></div>
<div style="left:56px;top:70px;width:248px;height:61px;background:#1c2a43"></div>
<div style="left:304px;top:70px;width:11px;height:61px;background:#050a10"></div>
<svg style="left:-179px;top:69px" width="500" height="64"><rect x="197.7" y="3.8" width="15.4" height="14.1" fill="#aab2bc"/><rect x="201.6" y="3.8" width="2" height="7" fill="#28347a"/><rect x="207.4" y="3.8" width="2" height="7" fill="#28347a"/><path d="M202.6 10.8V17.9M208.4 10.8V17.9" stroke="#28347a" stroke-width="0.9"/></svg>
<svg style="left:-179px;top:69px" width="500" height="64"><g transform="translate(254.5 45) rotate(-27)" opacity="0.85"><rect x="-12.5" y="-3" width="25" height="6.5" fill="#4a5058"/><path d="M-11 1.8H12" stroke="#a4a8ae" stroke-width="2.6" stroke-dasharray="1.3 0.9"/><path d="M-6 -1.5H11" stroke="#d0d4d8" stroke-width="1.4" stroke-dasharray="2 1.5"/></g></svg>
<div class="t" style="left:111px;top:76px;font-size:12.5px;color:#a4abb4;font-weight:bold;">ME80v2 01</div>
<div style="left:111px;top:93px;width:47px;height:16px;background:#2d3b52;border:1px solid #152030;border-radius:3px"></div>
<div style="left:161px;top:93px;width:47px;height:16px;background:#2d3b52;border:1px solid #152030;border-radius:3px"></div>
<div style="left:211px;top:93px;width:47px;height:16px;background:#2d3b52;border:1px solid #152030;border-radius:3px"></div>
<div style="left:261px;top:93px;width:22px;height:16px;background:#2d3b52;border:1px solid #152030;border-radius:3px"></div>
<svg style="left:-179px;top:69px" width="500" height="64"><circle cx="301" cy="31.9" r="4" fill="#1b2638"/><path d="M323.1 29.6H325.4L328 27.6V36.2L325.4 34.1H323.1Z" fill="#1b2638"/><path d="M346.8 33L354.3 29.5A4.2 4.2 0 1 0 353.8 34.5" fill="none" stroke="#1b2638" stroke-width="1.4"/><rect x="369.9" y="27" width="11.2" height="8.9" fill="#1b2638"/><rect x="372.3" y="27" width="2.2" height="5.5" fill="#2d3b52"/><rect x="376.8" y="27" width="2.2" height="5.5" fill="#2d3b52"/><path d="M397 35.6V29H403Q403.5 29 403.5 29.5V31.8Q403.5 32.3 403 32.3H398L403.5 35.6" fill="none" stroke="#1b2638" stroke-width="2"/><path d="M421.9 28V34.6H427.9V28M424.9 28V34.6" fill="none" stroke="#1b2638" stroke-width="2"/><rect x="443.6" y="29.6" width="13.8" height="5.6" fill="none" stroke="#060a12" stroke-width="1.3"/><path d="M448.2 29.6V35.2M452.8 29.6V35.2" stroke="#060a12" stroke-width="1.3"/></svg>
<div style="left:111px;top:113px;width:22px;height:16px;background:#2d3b52;border:1px solid #152030;border-radius:3px"></div>
<svg style="left:-179px;top:69px" width="500" height="64"><path d="M294.6 48V54.6H305.6V48" fill="none" stroke="#060a12" stroke-width="1.2" transform="translate(0 -0.5)"/><path d="M297.8 49.5H302.6M297.8 51.5H304.3" stroke="#060a12" stroke-width="1.2"/></svg>
<div style="left:4px;top:131px;width:12px;height:62px;background:#0a1018"></div>
<div style="left:4px;top:131px;width:12px;height:1px;background:#2c3642"></div>
<div style="left:16px;top:131px;width:40px;height:62px;background:#2a357a"></div>
<div style="left:16px;top:131px;width:40px;height:1px;background:rgba(200,210,230,0.35)"></div>
<div style="left:56px;top:131px;width:259px;height:1px;background:#5c6a77"></div>
<div style="left:56px;top:132px;width:248px;height:61px;background:#1c2a43"></div>
<div style="left:304px;top:132px;width:11px;height:61px;background:#050a10"></div>
<svg style="left:-179px;top:131px" width="500" height="64"><rect x="197.7" y="3.8" width="15.4" height="14.1" fill="#aab2bc"/><rect x="201.6" y="3.8" width="2" height="7" fill="#2a357a"/><rect x="207.4" y="3.8" width="2" height="7" fill="#2a357a"/><path d="M202.6 10.8V17.9M208.4 10.8V17.9" stroke="#2a357a" stroke-width="0.9"/></svg>
<svg style="left:-179px;top:131px" width="500" height="64"><g transform="translate(254.5 45) rotate(-27)" opacity="0.85"><rect x="-12.5" y="-3" width="25" height="6.5" fill="#4a5058"/><path d="M-11 1.8H12" stroke="#a4a8ae" stroke-width="2.6" stroke-dasharray="1.3 0.9"/><path d="M-6 -1.5H11" stroke="#d0d4d8" stroke-width="1.4" stroke-dasharray="2 1.5"/></g></svg>
<div class="t" style="left:111px;top:138px;font-size:12.5px;color:#a4abb4;font-weight:bold;">ME80v2 02</div>
<div style="left:111px;top:155px;width:47px;height:16px;background:#2d3b52;border:1px solid #152030;border-radius:3px"></div>
<div style="left:161px;top:155px;width:47px;height:16px;background:#2d3b52;border:1px solid #152030;border-radius:3px"></div>
<div style="left:211px;top:155px;width:47px;height:16px;background:#2d3b52;border:1px solid #152030;border-radius:3px"></div>
<div style="left:261px;top:155px;width:22px;height:16px;background:#2d3b52;border:1px solid #152030;border-radius:3px"></div>
<svg style="left:-179px;top:131px" width="500" height="64"><circle cx="301" cy="31.9" r="4" fill="#1b2638"/><path d="M323.1 29.6H325.4L328 27.6V36.2L325.4 34.1H323.1Z" fill="#1b2638"/><path d="M346.8 33L354.3 29.5A4.2 4.2 0 1 0 353.8 34.5" fill="none" stroke="#1b2638" stroke-width="1.4"/><rect x="369.9" y="27" width="11.2" height="8.9" fill="#1b2638"/><rect x="372.3" y="27" width="2.2" height="5.5" fill="#2d3b52"/><rect x="376.8" y="27" width="2.2" height="5.5" fill="#2d3b52"/><path d="M397 35.6V29H403Q403.5 29 403.5 29.5V31.8Q403.5 32.3 403 32.3H398L403.5 35.6" fill="none" stroke="#1b2638" stroke-width="2"/><path d="M421.9 28V34.6H427.9V28M424.9 28V34.6" fill="none" stroke="#1b2638" stroke-width="2"/><rect x="443.6" y="29.6" width="13.8" height="5.6" fill="none" stroke="#060a12" stroke-width="1.3"/><path d="M448.2 29.6V35.2M452.8 29.6V35.2" stroke="#060a12" stroke-width="1.3"/></svg>
<div style="left:111px;top:175px;width:22px;height:16px;background:#2d3b52;border:1px solid #152030;border-radius:3px"></div>
<svg style="left:-179px;top:131px" width="500" height="64"><path d="M294.6 48V54.6H305.6V48" fill="none" stroke="#060a12" stroke-width="1.2" transform="translate(0 -0.5)"/><path d="M297.8 49.5H302.6M297.8 51.5H304.3" stroke="#060a12" stroke-width="1.2"/></svg>
<div style="left:4px;top:193px;width:12px;height:62px;background:#0a1018"></div>
<div style="left:4px;top:193px;width:12px;height:1px;background:#2c3642"></div>
<div style="left:16px;top:193px;width:40px;height:62px;background:#2b3778"></div>
<div style="left:16px;top:193px;width:40px;height:1px;background:rgba(200,210,230,0.35)"></div>
<div style="left:56px;top:193px;width:259px;height:1px;background:#5c6a77"></div>
<div style="left:56px;top:194px;width:248px;height:61px;background:#1c2a43"></div>
<div style="left:304px;top:194px;width:11px;height:61px;background:#050a10"></div>
<svg style="left:-179px;top:193px" width="500" height="64"><rect x="197.7" y="3.8" width="15.4" height="14.1" fill="#aab2bc"/><rect x="201.6" y="3.8" width="2" height="7" fill="#2b3778"/><rect x="207.4" y="3.8" width="2" height="7" fill="#2b3778"/><path d="M202.6 10.8V17.9M208.4 10.8V17.9" stroke="#2b3778" stroke-width="0.9"/></svg>
<svg style="left:-179px;top:193px" width="500" height="64"><g transform="translate(254.5 45) rotate(-27)" opacity="0.85"><rect x="-12.5" y="-3" width="25" height="6.5" fill="#4a5058"/><path d="M-11 1.8H12" stroke="#a4a8ae" stroke-width="2.6" stroke-dasharray="1.3 0.9"/><path d="M-6 -1.5H11" stroke="#d0d4d8" stroke-width="1.4" stroke-dasharray="2 1.5"/></g></svg>
<div class="t" style="left:111px;top:200px;font-size:12.5px;color:#a4abb4;font-weight:bold;">Pigments 01</div>
<div style="left:111px;top:217px;width:47px;height:16px;background:#2d3b52;border:1px solid #152030;border-radius:3px"></div>
<div style="left:161px;top:217px;width:47px;height:16px;background:#2d3b52;border:1px solid #152030;border-radius:3px"></div>
<div style="left:211px;top:217px;width:47px;height:16px;background:#2d3b52;border:1px solid #152030;border-radius:3px"></div>
<div style="left:261px;top:217px;width:22px;height:16px;background:#2d3b52;border:1px solid #152030;border-radius:3px"></div>
<svg style="left:-179px;top:193px" width="500" height="64"><circle cx="301" cy="31.9" r="4" fill="#1b2638"/><path d="M323.1 29.6H325.4L328 27.6V36.2L325.4 34.1H323.1Z" fill="#1b2638"/><path d="M346.8 33L354.3 29.5A4.2 4.2 0 1 0 353.8 34.5" fill="none" stroke="#1b2638" stroke-width="1.4"/><rect x="369.9" y="27" width="11.2" height="8.9" fill="#1b2638"/><rect x="372.3" y="27" width="2.2" height="5.5" fill="#2d3b52"/><rect x="376.8" y="27" width="2.2" height="5.5" fill="#2d3b52"/><path d="M397 35.6V29H403Q403.5 29 403.5 29.5V31.8Q403.5 32.3 403 32.3H398L403.5 35.6" fill="none" stroke="#1b2638" stroke-width="2"/><path d="M421.9 28V34.6H427.9V28M424.9 28V34.6" fill="none" stroke="#1b2638" stroke-width="2"/><rect x="443.6" y="29.6" width="13.8" height="5.6" fill="none" stroke="#060a12" stroke-width="1.3"/><path d="M448.2 29.6V35.2M452.8 29.6V35.2" stroke="#060a12" stroke-width="1.3"/></svg>
<div style="left:111px;top:237px;width:22px;height:16px;background:#2d3b52;border:1px solid #152030;border-radius:3px"></div>
<svg style="left:-179px;top:193px" width="500" height="64"><path d="M294.6 48V54.6H305.6V48" fill="none" stroke="#060a12" stroke-width="1.2" transform="translate(0 -0.5)"/><path d="M297.8 49.5H302.6M297.8 51.5H304.3" stroke="#060a12" stroke-width="1.2"/></svg>
<div style="left:4px;top:255px;width:12px;height:62px;background:#0a1018"></div>
<div style="left:4px;top:255px;width:12px;height:1px;background:#2c3642"></div>
<div style="left:16px;top:255px;width:40px;height:62px;background:#2c3878"></div>
<div style="left:16px;top:255px;width:40px;height:1px;background:rgba(200,210,230,0.35)"></div>
<div style="left:56px;top:255px;width:259px;height:1px;background:#5c6a77"></div>
<div style="left:56px;top:256px;width:248px;height:61px;background:#1c2a43"></div>
<div style="left:304px;top:256px;width:11px;height:61px;background:#050a10"></div>
<svg style="left:-179px;top:255px" width="500" height="64"><rect x="197.7" y="3.8" width="15.4" height="14.1" fill="#aab2bc"/><rect x="201.6" y="3.8" width="2" height="7" fill="#2c3878"/><rect x="207.4" y="3.8" width="2" height="7" fill="#2c3878"/><path d="M202.6 10.8V17.9M208.4 10.8V17.9" stroke="#2c3878" stroke-width="0.9"/></svg>
<svg style="left:-179px;top:255px" width="500" height="64"><g transform="translate(254.5 45) rotate(-27)" opacity="0.85"><rect x="-12.5" y="-3" width="25" height="6.5" fill="#4a5058"/><path d="M-11 1.8H12" stroke="#a4a8ae" stroke-width="2.6" stroke-dasharray="1.3 0.9"/><path d="M-6 -1.5H11" stroke="#d0d4d8" stroke-width="1.4" stroke-dasharray="2 1.5"/></g></svg>
<div class="t" style="left:111px;top:262px;font-size:12.5px;color:#a4abb4;font-weight:bold;">Pigments 02</div>
<div style="left:111px;top:279px;width:47px;height:16px;background:#2d3b52;border:1px solid #152030;border-radius:3px"></div>
<div style="left:161px;top:279px;width:47px;height:16px;background:#2d3b52;border:1px solid #152030;border-radius:3px"></div>
<div style="left:211px;top:279px;width:47px;height:16px;background:#2d3b52;border:1px solid #152030;border-radius:3px"></div>
<div style="left:261px;top:279px;width:22px;height:16px;background:#2d3b52;border:1px solid #152030;border-radius:3px"></div>
<svg style="left:-179px;top:255px" width="500" height="64"><circle cx="301" cy="31.9" r="4" fill="#1b2638"/><path d="M323.1 29.6H325.4L328 27.6V36.2L325.4 34.1H323.1Z" fill="#1b2638"/><path d="M346.8 33L354.3 29.5A4.2 4.2 0 1 0 353.8 34.5" fill="none" stroke="#1b2638" stroke-width="1.4"/><rect x="369.9" y="27" width="11.2" height="8.9" fill="#1b2638"/><rect x="372.3" y="27" width="2.2" height="5.5" fill="#2d3b52"/><rect x="376.8" y="27" width="2.2" height="5.5" fill="#2d3b52"/><path d="M397 35.6V29H403Q403.5 29 403.5 29.5V31.8Q403.5 32.3 403 32.3H398L403.5 35.6" fill="none" stroke="#1b2638" stroke-width="2"/><path d="M421.9 28V34.6H427.9V28M424.9 28V34.6" fill="none" stroke="#1b2638" stroke-width="2"/><rect x="443.6" y="29.6" width="13.8" height="5.6" fill="none" stroke="#060a12" stroke-width="1.3"/><path d="M448.2 29.6V35.2M452.8 29.6V35.2" stroke="#060a12" stroke-width="1.3"/></svg>
<div style="left:111px;top:299px;width:22px;height:16px;background:#2d3b52;border:1px solid #152030;border-radius:3px"></div>
<svg style="left:-179px;top:255px" width="500" height="64"><path d="M294.6 48V54.6H305.6V48" fill="none" stroke="#060a12" stroke-width="1.2" transform="translate(0 -0.5)"/><path d="M297.8 49.5H302.6M297.8 51.5H304.3" stroke="#060a12" stroke-width="1.2"/></svg>
<div style="left:4px;top:317px;width:12px;height:62px;background:#0a1018"></div>
<div style="left:4px;top:317px;width:12px;height:1px;background:#2c3642"></div>
<div style="left:16px;top:317px;width:40px;height:62px;background:#7b89d2"></div>
<div style="left:16px;top:317px;width:40px;height:1px;background:rgba(200,210,230,0.35)"></div>
<div style="left:56px;top:317px;width:259px;height:1px;background:#5c6a77"></div>
<div style="left:56px;top:318px;width:248px;height:61px;background:#3a4a63"></div>
<div style="left:304px;top:318px;width:11px;height:61px;background:#050a10"></div>
<svg style="left:-179px;top:317px" width="500" height="64"><rect x="197.7" y="3.8" width="15.4" height="14.1" fill="#ffffff"/><rect x="201.6" y="3.8" width="2" height="7" fill="#7b89d2"/><rect x="207.4" y="3.8" width="2" height="7" fill="#7b89d2"/><path d="M202.6 10.8V17.9M208.4 10.8V17.9" stroke="#7b89d2" stroke-width="0.9"/></svg>
<svg style="left:-179px;top:317px" width="500" height="64"><g transform="translate(254.5 45) rotate(-27)" opacity="0.85"><rect x="-12.5" y="-3" width="25" height="6.5" fill="#4a5058"/><path d="M-11 1.8H12" stroke="#a4a8ae" stroke-width="2.6" stroke-dasharray="1.3 0.9"/><path d="M-6 -1.5H11" stroke="#d0d4d8" stroke-width="1.4" stroke-dasharray="2 1.5"/></g></svg>
<div class="t" style="left:111px;top:324px;font-size:12.5px;color:#fff;font-weight:bold;">Saurus</div>
<div style="left:111px;top:341px;width:47px;height:16px;background:linear-gradient(#5e6c82,#526076);border:1px solid #1e2630;border-radius:3px"></div>
<div style="left:161px;top:341px;width:47px;height:16px;background:linear-gradient(#5e6c82,#526076);border:1px solid #1e2630;border-radius:3px"></div>
<div style="left:211px;top:341px;width:47px;height:16px;background:linear-gradient(#5e6c82,#526076);border:1px solid #1e2630;border-radius:3px"></div>
<div style="left:261px;top:341px;width:22px;height:16px;background:linear-gradient(#5e6c82,#526076);border:1px solid #1e2630;border-radius:3px"></div>
<svg style="left:-179px;top:317px" width="500" height="64"><circle cx="301" cy="31.9" r="4" fill="#000"/><path d="M323.1 29.6H325.4L328 27.6V36.2L325.4 34.1H323.1Z" fill="#000"/><path d="M346.8 33L354.3 29.5A4.2 4.2 0 1 0 353.8 34.5" fill="none" stroke="#000" stroke-width="1.4"/><rect x="369.9" y="27" width="11.2" height="8.9" fill="#000"/><rect x="372.3" y="27" width="2.2" height="5.5" fill="#56647a"/><rect x="376.8" y="27" width="2.2" height="5.5" fill="#56647a"/><path d="M397 35.6V29H403Q403.5 29 403.5 29.5V31.8Q403.5 32.3 403 32.3H398L403.5 35.6" fill="none" stroke="#000" stroke-width="2"/><path d="M421.9 28V34.6H427.9V28M424.9 28V34.6" fill="none" stroke="#000" stroke-width="2"/><rect x="443.6" y="29.6" width="13.8" height="5.6" fill="none" stroke="#000" stroke-width="1.3"/><path d="M448.2 29.6V35.2M452.8 29.6V35.2" stroke="#000" stroke-width="1.3"/></svg>
<div style="left:62px;top:320px;width:45px;height:16px;background:linear-gradient(#5e6c82,#526076);border:1px solid #1e2630;border-radius:3px"></div>
<div style="left:84px;top:321px;width:1px;height:14px;background:#1e2630"></div>
<svg style="left:-179px;top:317px" width="500" height="64"><path d="M250.2 15.4V9.4H255.7V15.4M252.95 9.4V15.4" fill="none" stroke="#000" stroke-width="2.2"/><path d="M278.3 9.4H270.4V12.4H277.6V15.4H269.6" fill="none" stroke="#000" stroke-width="1.9"/></svg>
<div style="left:111px;top:361px;width:72px;height:16px;background:linear-gradient(#5e6c82,#526076);border:1px solid #1e2630;border-radius:3px"></div>
<div style="left:112px;top:362px;width:22px;height:14px;background:linear-gradient(#b4dcff,#7cb4f4);border-radius:2px 0 0 2px"></div>
<div style="left:185px;top:361px;width:23px;height:16px;background:linear-gradient(#5e6c82,#526076);border:1px solid #1e2630;border-radius:3px"></div>
<svg style="left:-179px;top:317px" width="500" height="64"><path d="M294.2 51.5H307" stroke="#000" stroke-width="1.2"/><rect x="298.6" y="49.5" width="4" height="4" fill="#a8d0fc" stroke="#000" stroke-width="1.3"/><path d="M325.5 45.6L332 51.5L325.5 57.4L319 51.5Z" fill="none" stroke="#000" stroke-width="1.2"/><path d="M325.5 45.6V57.2M318.4 51.5H320M331 51.5H332.6" stroke="#000" stroke-width="1.2"/><path d="M344.2 54.3H357M346.3 54.3V50.5H349.5M354 50.5H357" fill="none" stroke="#000" stroke-width="1.2"/><rect x="349.5" y="48.3" width="4.5" height="4.4" fill="none" stroke="#000" stroke-width="1.2"/><path d="M369.6 48V54.6H381.6V48" fill="none" stroke="#000" stroke-width="1.2"/><path d="M372.5 49.5H377M372.5 51.5H378.7" stroke="#000" stroke-width="1.2"/></svg>
<div class="t" style="left:40px;top:326px;font-size:9.5px;color:#5a647a;font-weight:normal;">17</div>
<div style="left:4px;top:379px;width:12px;height:62px;background:#0a1018"></div>
<div style="left:4px;top:379px;width:12px;height:1px;background:#2c3642"></div>
<div style="left:16px;top:379px;width:40px;height:62px;background:#1b2182"></div>
<div style="left:16px;top:379px;width:40px;height:1px;background:rgba(200,210,230,0.35)"></div>
<div style="left:56px;top:379px;width:259px;height:1px;background:#5c6a77"></div>
<div style="left:56px;top:380px;width:248px;height:61px;background:#ececec"></div>
<div style="left:304px;top:380px;width:11px;height:61px;background:#050a10"></div>
<svg style="left:-179px;top:379px" width="500" height="64"><rect x="197.7" y="3.8" width="15.4" height="14.1" fill="#ffffff"/><rect x="201.6" y="3.8" width="2" height="7" fill="#1b2182"/><rect x="207.4" y="3.8" width="2" height="7" fill="#1b2182"/><path d="M202.6 10.8V17.9M208.4 10.8V17.9" stroke="#1b2182" stroke-width="0.9"/></svg>
<svg style="left:-179px;top:379px" width="500" height="64"><g transform="translate(254.5 45) rotate(-27)" opacity="0.85"><rect x="-12.5" y="-3" width="25" height="6.5" fill="#303438"/><path d="M-11 1.8H12" stroke="#8a8e92" stroke-width="2.6" stroke-dasharray="1.3 0.9"/><path d="M-6 -1.5H11" stroke="#f8f8f8" stroke-width="1.4" stroke-dasharray="2 1.5"/></g></svg>
<div class="t" style="left:111px;top:386px;font-size:12.5px;color:#000;font-weight:bold;">VPS Avenger 01</div>
<div style="left:111px;top:403px;width:47px;height:16px;background:linear-gradient(#fbfbfb,#dedede);border:1px solid #5a5e64;border-radius:3px"></div>
<div style="left:161px;top:403px;width:47px;height:16px;background:linear-gradient(#fbfbfb,#dedede);border:1px solid #5a5e64;border-radius:3px"></div>
<div style="left:211px;top:403px;width:47px;height:16px;background:linear-gradient(#fbfbfb,#dedede);border:1px solid #5a5e64;border-radius:3px"></div>
<div style="left:261px;top:403px;width:22px;height:16px;background:linear-gradient(#fbfbfb,#dedede);border:1px solid #5a5e64;border-radius:3px"></div>
<svg style="left:-179px;top:379px" width="500" height="64"><circle cx="301" cy="31.9" r="4" fill="#000"/><path d="M323.1 29.6H325.4L328 27.6V36.2L325.4 34.1H323.1Z" fill="#000"/><path d="M346.8 33L354.3 29.5A4.2 4.2 0 1 0 353.8 34.5" fill="none" stroke="#000" stroke-width="1.4"/><rect x="369.9" y="27" width="11.2" height="8.9" fill="#000"/><rect x="372.3" y="27" width="2.2" height="5.5" fill="#e8e8e8"/><rect x="376.8" y="27" width="2.2" height="5.5" fill="#e8e8e8"/><path d="M397 35.6V29H403Q403.5 29 403.5 29.5V31.8Q403.5 32.3 403 32.3H398L403.5 35.6" fill="none" stroke="#000" stroke-width="2"/><path d="M421.9 28V34.6H427.9V28M424.9 28V34.6" fill="none" stroke="#000" stroke-width="2"/><rect x="443.6" y="29.6" width="13.8" height="5.6" fill="none" stroke="#000" stroke-width="1.3"/><path d="M448.2 29.6V35.2M452.8 29.6V35.2" stroke="#000" stroke-width="1.3"/></svg>
<div style="left:62px;top:382px;width:45px;height:16px;background:linear-gradient(#fbfbfb,#dedede);border:1px solid #5a5e64;border-radius:3px"></div>
<div style="left:84px;top:383px;width:1px;height:14px;background:#5a5e64"></div>
<svg style="left:-179px;top:379px" width="500" height="64"><path d="M250.2 15.4V9.4H255.7V15.4M252.95 9.4V15.4" fill="none" stroke="#000" stroke-width="2.2"/><path d="M278.3 9.4H270.4V12.4H277.6V15.4H269.6" fill="none" stroke="#000" stroke-width="1.9"/></svg>
<div style="left:111px;top:423px;width:72px;height:16px;background:linear-gradient(#fbfbfb,#dedede);border:1px solid #5a5e64;border-radius:3px"></div>
<div style="left:185px;top:423px;width:23px;height:16px;background:linear-gradient(#fbfbfb,#dedede);border:1px solid #5a5e64;border-radius:3px"></div>
<svg style="left:-179px;top:379px" width="500" height="64"><path d="M294.2 51.5H307" stroke="#000" stroke-width="1.2"/><rect x="298.6" y="49.5" width="4" height="4" fill="#eee" stroke="#000" stroke-width="1.3"/><path d="M325.5 45.6L332 51.5L325.5 57.4L319 51.5Z" fill="none" stroke="#000" stroke-width="1.2"/><path d="M325.5 45.6V57.2M318.4 51.5H320M331 51.5H332.6" stroke="#000" stroke-width="1.2"/><path d="M344.2 54.3H357M346.3 54.3V50.5H349.5M354 50.5H357" fill="none" stroke="#000" stroke-width="1.2"/><rect x="349.5" y="48.3" width="4.5" height="4.4" fill="none" stroke="#000" stroke-width="1.2"/><path d="M369.6 48V54.6H381.6V48" fill="none" stroke="#000" stroke-width="1.2"/><path d="M372.5 49.5H377M372.5 51.5H378.7" stroke="#000" stroke-width="1.2"/></svg>
<div style="left:112px;top:404px;width:23px;height:14px;background:linear-gradient(#e86068,#c83038);border-radius:2px 0 0 2px"></div>
<svg style="left:-179px;top:379px" width="500" height="64"><circle cx="301" cy="31.9" r="4" fill="#000"/></svg>
<div class="t" style="left:40px;top:388px;font-size:9.5px;color:#3a4096;font-weight:normal;">18</div>
<div style="left:4px;top:441px;width:12px;height:62px;background:#0a1018"></div>
<div style="left:4px;top:441px;width:12px;height:1px;background:#2c3642"></div>
<div style="left:16px;top:441px;width:40px;height:62px;background:#5b6172"></div>
<div style="left:16px;top:441px;width:40px;height:1px;background:rgba(200,210,230,0.35)"></div>
<div style="left:56px;top:441px;width:259px;height:1px;background:#5c6a77"></div>
<div style="left:56px;top:442px;width:248px;height:61px;background:#1c2a43"></div>
<div style="left:304px;top:442px;width:11px;height:61px;background:#050a10"></div>
<svg style="left:-179px;top:441px" width="500" height="64"><rect x="197.7" y="3.8" width="15.4" height="14.1" fill="#b4bcc6"/><rect x="201.6" y="3.8" width="2" height="7" fill="#5b6172"/><rect x="207.4" y="3.8" width="2" height="7" fill="#5b6172"/><path d="M202.6 10.8V17.9M208.4 10.8V17.9" stroke="#5b6172" stroke-width="0.9"/></svg>
<svg style="left:-179px;top:441px" width="500" height="64"><g transform="translate(254.5 45) rotate(-27)" opacity="0.85"><rect x="-12.5" y="-3" width="25" height="6.5" fill="#4a5058"/><path d="M-11 1.8H12" stroke="#a4a8ae" stroke-width="2.6" stroke-dasharray="1.3 0.9"/><path d="M-6 -1.5H11" stroke="#d0d4d8" stroke-width="1.4" stroke-dasharray="2 1.5"/></g></svg>
<div class="t" style="left:111px;top:448px;font-size:12.5px;color:#a4abb4;font-weight:bold;">VPS Avenger 02</div>
<div style="left:111px;top:465px;width:47px;height:16px;background:#2d3b52;border:1px solid #152030;border-radius:3px"></div>
<div style="left:161px;top:465px;width:47px;height:16px;background:#2d3b52;border:1px solid #152030;border-radius:3px"></div>
<div style="left:211px;top:465px;width:47px;height:16px;background:#2d3b52;border:1px solid #152030;border-radius:3px"></div>
<div style="left:261px;top:465px;width:22px;height:16px;background:#2d3b52;border:1px solid #152030;border-radius:3px"></div>
<svg style="left:-179px;top:441px" width="500" height="64"><circle cx="301" cy="31.9" r="4" fill="#1b2638"/><path d="M323.1 29.6H325.4L328 27.6V36.2L325.4 34.1H323.1Z" fill="#1b2638"/><path d="M346.8 33L354.3 29.5A4.2 4.2 0 1 0 353.8 34.5" fill="none" stroke="#1b2638" stroke-width="1.4"/><rect x="369.9" y="27" width="11.2" height="8.9" fill="#1b2638"/><rect x="372.3" y="27" width="2.2" height="5.5" fill="#2d3b52"/><rect x="376.8" y="27" width="2.2" height="5.5" fill="#2d3b52"/><path d="M397 35.6V29H403Q403.5 29 403.5 29.5V31.8Q403.5 32.3 403 32.3H398L403.5 35.6" fill="none" stroke="#1b2638" stroke-width="2"/><path d="M421.9 28V34.6H427.9V28M424.9 28V34.6" fill="none" stroke="#1b2638" stroke-width="2"/><rect x="443.6" y="29.6" width="13.8" height="5.6" fill="none" stroke="#060a12" stroke-width="1.3"/><path d="M448.2 29.6V35.2M452.8 29.6V35.2" stroke="#060a12" stroke-width="1.3"/></svg>
<div style="left:111px;top:485px;width:22px;height:16px;background:#2d3b52;border:1px solid #152030;border-radius:3px"></div>
<svg style="left:-179px;top:441px" width="500" height="64"><path d="M294.6 48V54.6H305.6V48" fill="none" stroke="#060a12" stroke-width="1.2" transform="translate(0 -0.5)"/><path d="M297.8 49.5H302.6M297.8 51.5H304.3" stroke="#060a12" stroke-width="1.2"/></svg>
</div>
<div style="left:494px;top:0px;width:4px;height:678px;background:#5a6a78"></div>
<div style="left:495px;top:0px;width:1px;height:678px;background:#8a98a4"></div>
<svg style="left:495px;top:383px" width="3" height="24"><path d="M1 0V22" stroke="#fff" stroke-width="2.2" stroke-dasharray="4.2 1.8"/></svg>
<div style="left:498px;top:0;width:449px;height:678px;overflow:hidden;background:#dcdcdc">
<div style="left:0px;top:0px;width:449px;height:17px;background:#16212d"></div>
<div style="left:0px;top:17px;width:449px;height:20px;background:#b5c8cc"></div>
<svg style="left:0;top:0" width="449" height="678"><path d="M68.5 0V17" stroke="#e8ecf0" stroke-width="1"/><path d="M122.5 0V17" stroke="#e8ecf0" stroke-width="1"/><path d="M176.5 0V17" stroke="#e8ecf0" stroke-width="1"/><path d="M231.5 0V17" stroke="#e8ecf0" stroke-width="1"/><path d="M285.5 0V17" stroke="#e8ecf0" stroke-width="1"/><path d="M339.5 0V17" stroke="#e8ecf0" stroke-width="1"/><path d="M394.5 0V17" stroke="#e8ecf0" stroke-width="1"/><path d="M448.5 0V17" stroke="#e8ecf0" stroke-width="1"/><path d="M0.5 17V36" stroke="#101418" stroke-width="1.2"/><path d="M16.5 17V25" stroke="#6a7a80" stroke-width="1"/><path d="M32.5 17V25" stroke="#6a7a80" stroke-width="1"/><path d="M48.5 17V25" stroke="#6a7a80" stroke-width="1"/><path d="M63.5 17V25" stroke="#6a7a80" stroke-width="1"/><path d="M79.5 17V36" stroke="#101418" stroke-width="1.2"/><path d="M95.5 17V25" stroke="#6a7a80" stroke-width="1"/><path d="M111.5 17V25" stroke="#6a7a80" stroke-width="1"/><path d="M127.5 17V25" stroke="#6a7a80" stroke-width="1"/><path d="M143.5 17V25" stroke="#6a7a80" stroke-width="1"/><path d="M158.5 17V36" stroke="#101418" stroke-width="1.2"/><path d="M174.5 17V25" stroke="#6a7a80" stroke-width="1"/><path d="M190.5 17V25" stroke="#6a7a80" stroke-width="1"/><path d="M206.5 17V25" stroke="#6a7a80" stroke-width="1"/><path d="M222.5 17V25" stroke="#6a7a80" stroke-width="1"/><path d="M238.5 17V36" stroke="#101418" stroke-width="1.2"/><path d="M254.5 17V25" stroke="#6a7a80" stroke-width="1"/><path d="M269.5 17V25" stroke="#6a7a80" stroke-width="1"/><path d="M285.5 17V25" stroke="#6a7a80" stroke-width="1"/><path d="M301.5 17V25" stroke="#6a7a80" stroke-width="1"/><path d="M317.5 17V36" stroke="#101418" stroke-width="1.2"/><path d="M333.5 17V25" stroke="#6a7a80" stroke-width="1"/><path d="M349.5 17V25" stroke="#6a7a80" stroke-width="1"/><path d="M365.5 17V25" stroke="#6a7a80" stroke-width="1"/><path d="M380.5 17V25" stroke="#6a7a80" stroke-width="1"/><path d="M396.5 17V36" stroke="#101418" stroke-width="1.2"/><path d="M412.5 17V25" stroke="#6a7a80" stroke-width="1"/><path d="M428.5 17V25" stroke="#6a7a80" stroke-width="1"/><path d="M444.5 17V25" stroke="#6a7a80" stroke-width="1"/><path d="M460.5 17V25" stroke="#6a7a80" stroke-width="1"/><path d="M476.5 17V36" stroke="#101418" stroke-width="1.2"/><path d="M491.5 17V25" stroke="#6a7a80" stroke-width="1"/><path d="M507.5 17V25" stroke="#6a7a80" stroke-width="1"/><path d="M523.5 17V25" stroke="#6a7a80" stroke-width="1"/><path d="M539.5 17V25" stroke="#6a7a80" stroke-width="1"/><path d="M555.5 17V36" stroke="#101418" stroke-width="1.2"/><path d="M571.5 17V25" stroke="#6a7a80" stroke-width="1"/><path d="M586.5 17V25" stroke="#6a7a80" stroke-width="1"/><path d="M602.5 17V25" stroke="#6a7a80" stroke-width="1"/><path d="M618.5 17V25" stroke="#6a7a80" stroke-width="1"/><path d="M634.5 17V36" stroke="#101418" stroke-width="1.2"/><path d="M650.5 17V25" stroke="#6a7a80" stroke-width="1"/><path d="M666.5 17V25" stroke="#6a7a80" stroke-width="1"/><path d="M682.5 17V25" stroke="#6a7a80" stroke-width="1"/><path d="M697.5 17V25" stroke="#6a7a80" stroke-width="1"/><path d="M713.5 17V36" stroke="#101418" stroke-width="1.2"/><path d="M729.5 17V25" stroke="#6a7a80" stroke-width="1"/><path d="M745.5 17V25" stroke="#6a7a80" stroke-width="1"/><path d="M761.5 17V25" stroke="#6a7a80" stroke-width="1"/><path d="M777.5 17V25" stroke="#6a7a80" stroke-width="1"/><path d="M792.5 17V36" stroke="#101418" stroke-width="1.2"/><path d="M808.5 17V25" stroke="#6a7a80" stroke-width="1"/><path d="M824.5 17V25" stroke="#6a7a80" stroke-width="1"/><path d="M840.5 17V25" stroke="#6a7a80" stroke-width="1"/><path d="M856.5 17V25" stroke="#6a7a80" stroke-width="1"/><path d="M872.5 17V36" stroke="#101418" stroke-width="1.2"/><path d="M888.5 17V25" stroke="#6a7a80" stroke-width="1"/><path d="M903.5 17V25" stroke="#6a7a80" stroke-width="1"/><path d="M919.5 17V25" stroke="#6a7a80" stroke-width="1"/><path d="M935.5 17V25" stroke="#6a7a80" stroke-width="1"/></svg>
<div class="t" style="left:19px;top:5px;font-size:11px;color:#fff;font-weight:bold;">1</div>
<div class="t" style="left:73px;top:5px;font-size:11px;color:#fff;font-weight:bold;">5</div>
<div class="t" style="left:127px;top:5px;font-size:11px;color:#fff;font-weight:bold;">9</div>
<div class="t" style="left:181px;top:5px;font-size:11px;color:#fff;font-weight:bold;">13</div>
<div class="t" style="left:236px;top:5px;font-size:11px;color:#fff;font-weight:bold;">17</div>
<div class="t" style="left:290px;top:5px;font-size:11px;color:#fff;font-weight:bold;">21</div>
<div class="t" style="left:344px;top:5px;font-size:11px;color:#fff;font-weight:bold;">25</div>
<div class="t" style="left:399px;top:5px;font-size:11px;color:#fff;font-weight:bold;">29</div>
<div class="t" style="left:453px;top:5px;font-size:11px;color:#fff;font-weight:bold;">33</div>
<div class="t" style="left:5px;top:24px;font-size:10.5px;color:#3a4a58;font-weight:normal;">0</div>
<div class="t" style="left:163px;top:24px;font-size:10.5px;color:#3a4a58;font-weight:normal;">20</div>
<div class="t" style="left:322px;top:24px;font-size:10.5px;color:#3a4a58;font-weight:normal;">40</div>
<svg style="left:0;top:0" width="449" height="678"><path d="M0 79.5H449" stroke="#a8aaae" stroke-width="1"/><path d="M0 121.5H449" stroke="#a8aaae" stroke-width="1"/><path d="M0 143.5H449" stroke="#a8aaae" stroke-width="1"/><path d="M0 165.5H449" stroke="#a8aaae" stroke-width="1"/><path d="M0 218.5H449" stroke="#a8aaae" stroke-width="1"/><path d="M0 280.5H449" stroke="#a8aaae" stroke-width="1"/><path d="M0 342.5H449" stroke="#a8aaae" stroke-width="1"/><path d="M0 404.5H449" stroke="#a8aaae" stroke-width="1"/><path d="M0 466.5H449" stroke="#a8aaae" stroke-width="1"/><path d="M0 528.5H449" stroke="#a8aaae" stroke-width="1"/><path d="M0 590.5H449" stroke="#a8aaae" stroke-width="1"/><path d="M0 652.5H449" stroke="#a8aaae" stroke-width="1"/><path d="M68.5 37V678" stroke="#7a7c7e" stroke-width="1"/><path d="M122.5 37V678" stroke="#7a7c7e" stroke-width="1"/><path d="M176.5 37V678" stroke="#7a7c7e" stroke-width="1"/><path d="M231.5 37V678" stroke="#7a7c7e" stroke-width="1"/><path d="M285.5 37V678" stroke="#7a7c7e" stroke-width="1"/><path d="M339.5 37V678" stroke="#7a7c7e" stroke-width="1"/><path d="M394.5 37V678" stroke="#7a7c7e" stroke-width="1"/><path d="M448.5 37V678" stroke="#7a7c7e" stroke-width="1"/></svg>
<div style="left:0px;top:208px;width:449px;height:4px;background:#3a4a58"></div>
<div style="left:0px;top:209px;width:449px;height:1px;background:#5c6a78"></div>
<div style="left:15px;top:41px;width:434px;height:15px;background:#f8b048;border-top:1px solid #d08020;border-bottom:1px solid #d08020"></div>
<div style="left:231px;top:41px;width:1px;height:15px;background:#d08020"></div>
<div class="t" style="left:19px;top:44px;font-size:11px;color:#3a2608;font-weight:normal;">Intro -&nbsp; 1</div>
<div class="t" style="left:236px;top:44px;font-size:11px;color:#402a10;font-weight:normal;">2</div>
<svg style="left:0;top:0" width="449" height="678"><path d="M16 86.5H28.5L43.5 101.5H16Z" fill="#c01a1e"/><path d="M0.5 103H49L63.5 117.5H0.5Z" fill="#b2dcaa" stroke="#5a8a58" stroke-width="1"/><path d="M231 103H245L259.5 117.5H231Z" fill="#c01a1e"/><path d="M0 122.5H49.5L30.5 141.5H0Z" fill="#1aa2e8"/><path d="M0 150.5H449" stroke="#c49888" stroke-width="2"/><rect x="0.5" y="148.5" width="3" height="3" fill="#fff" stroke="#c49888"/></svg>
<div class="t" style="left:20px;top:90px;font-size:10.5px;color:#fff;font-weight:normal;">2</div>
<div class="t" style="left:2px;top:106.5px;font-size:11px;color:#1a2a18;font-weight:normal;">Cmaj -&nbsp; 1</div>
<div class="t" style="left:237px;top:106px;font-size:10.5px;color:#fff;font-weight:normal;">3</div>
<div class="t" style="left:6px;top:128px;font-size:11px;color:#0a1a40;font-weight:bold;">4/4</div>
<div class="t" style="left:28px;top:126px;font-size:9px;color:#0a3a70;font-weight:normal;">+</div>
<div style="left:16px;top:167px;width:10px;height:18px;background:#b2c8da;border:1px solid #6e8494"></div>
<div class="t" style="left:17.5px;top:169.5px;font-size:12.5px;color:#101820;font-weight:normal;transform:scaleX(0.86);transform-origin:0 0">C</div>
<div style="left:41px;top:167px;width:15px;height:18px;background:#b2c8da;border:1px solid #6e8494"></div>
<div class="t" style="left:42.5px;top:169.5px;font-size:12.5px;color:#101820;font-weight:normal;transform:scaleX(0.86);transform-origin:0 0">A&#9837;</div>
<div style="left:68px;top:167px;width:12px;height:18px;background:#b2c8da;border:1px solid #6e8494"></div>
<div class="t" style="left:69.5px;top:169.5px;font-size:12.5px;color:#101820;font-weight:normal;transform:scaleX(0.86);transform-origin:0 0">C</div>
<div style="left:95px;top:167px;width:16px;height:18px;background:#b2c8da;border:1px solid #6e8494"></div>
<div class="t" style="left:96.5px;top:169.5px;font-size:12.5px;color:#101820;font-weight:normal;transform:scaleX(0.86);transform-origin:0 0">A&#9837;</div>
<div style="left:122px;top:167px;width:15px;height:18px;background:#b2c8da;border:1px solid #6e8494"></div>
<div class="t" style="left:123.5px;top:169.5px;font-size:12.5px;color:#101820;font-weight:normal;transform:scaleX(0.86);transform-origin:0 0">E&#9837;</div>
<div style="left:149px;top:167px;width:11px;height:18px;background:#b2c8da;border:1px solid #6e8494"></div>
<div class="t" style="left:150.5px;top:169.5px;font-size:12.5px;color:#101820;font-weight:normal;transform:scaleX(0.86);transform-origin:0 0">F</div>
<div style="left:177px;top:167px;width:12px;height:18px;background:#b2c8da;border:1px solid #6e8494"></div>
<div class="t" style="left:178.5px;top:169.5px;font-size:12.5px;color:#101820;font-weight:normal;transform:scaleX(0.86);transform-origin:0 0">G</div>
<div style="left:204px;top:167px;width:12px;height:18px;background:#b2c8da;border:1px solid #6e8494"></div>
<div class="t" style="left:205.5px;top:169.5px;font-size:12.5px;color:#101820;font-weight:normal;transform:scaleX(0.86);transform-origin:0 0">C</div>
<div style="left:232px;top:167px;width:11px;height:18px;background:#b2c8da;border:1px solid #6e8494"></div>
<div class="t" style="left:233.5px;top:169.5px;font-size:12.5px;color:#101820;font-weight:normal;transform:scaleX(0.86);transform-origin:0 0">C</div>
<div style="left:258px;top:167px;width:27px;height:18px;background:#b2c8da;border:1px solid #6e8494"></div>
<div class="t" style="left:259.5px;top:169.5px;font-size:12.5px;color:#101820;font-weight:normal;transform:scaleX(0.86);transform-origin:0 0">A&#9837;/C</div>
<div style="left:286px;top:167px;width:11px;height:18px;background:#b2c8da;border:1px solid #6e8494"></div>
<div class="t" style="left:287.5px;top:169.5px;font-size:12.5px;color:#101820;font-weight:normal;transform:scaleX(0.86);transform-origin:0 0">C</div>
<div style="left:312px;top:167px;width:28px;height:18px;background:#b2c8da;border:1px solid #6e8494"></div>
<div class="t" style="left:313.5px;top:169.5px;font-size:12.5px;color:#101820;font-weight:normal;transform:scaleX(0.86);transform-origin:0 0">A&#9837;/C</div>
<div style="left:340px;top:167px;width:26px;height:18px;background:#b2c8da;border:1px solid #6e8494"></div>
<div class="t" style="left:341.5px;top:169.5px;font-size:12.5px;color:#101820;font-weight:normal;transform:scaleX(0.86);transform-origin:0 0">F<span style="font-size:9px">min</span></div>
<div style="left:366px;top:167px;width:15px;height:18px;background:#b2c8da;border:1px solid #6e8494"></div>
<div class="t" style="left:367.5px;top:169.5px;font-size:12.5px;color:#101820;font-weight:normal;transform:scaleX(0.86);transform-origin:0 0">E&#9837;</div>
<div style="left:395px;top:167px;width:15px;height:18px;background:#b2c8da;border:1px solid #6e8494"></div>
<div class="t" style="left:396.5px;top:169.5px;font-size:12.5px;color:#101820;font-weight:normal;transform:scaleX(0.86);transform-origin:0 0">B&#9837;</div>
<div style="left:421px;top:167px;width:41px;height:18px;background:#b2c8da;border:1px solid #6e8494"></div>
<div class="t" style="left:422.5px;top:169.5px;font-size:12.5px;color:#101820;font-weight:normal;transform:scaleX(0.86);transform-origin:0 0">F<span style="font-size:9px">min</span></div>
<div style="left:231px;top:530px;width:218px;height:59px;background:#7b89d2;border:1px solid #4a58b0"></div>
<div style="left:231px;top:592px;width:218px;height:58px;background:#1b2182;border:1px solid #0c1050"></div>
<svg style="left:0;top:0" width="449" height="678"><path d="M285.5 531V588" stroke="#5a68b8" stroke-width="1"/><path d="M285.5 593V649" stroke="#10164a" stroke-width="1"/><path d="M339.5 531V588" stroke="#5a68b8" stroke-width="1"/><path d="M339.5 593V649" stroke="#10164a" stroke-width="1"/><path d="M394.5 531V588" stroke="#5a68b8" stroke-width="1"/><path d="M394.5 593V649" stroke="#10164a" stroke-width="1"/><rect x="233" y="577" width="25" height="6" fill="#4a58a8"/><rect x="258" y="549" width="27.5" height="2.5" fill="#4a58a8"/><rect x="277.5" y="546" width="8.0" height="5.5" fill="#4a58a8"/><rect x="285.5" y="577" width="26.0" height="6" fill="#4a58a8"/><rect x="311" y="546" width="28.5" height="5.5" fill="#4a58a8"/><rect x="339.5" y="558.5" width="26.5" height="5.5" fill="#4a58a8"/><rect x="366" y="550" width="28.5" height="6" fill="#4a58a8"/><rect x="394.5" y="558.5" width="39.0" height="5.5" fill="#4a58a8"/><rect x="433.5" y="577" width="15.5" height="6" fill="#4a58a8"/><rect x="233" y="639" width="25" height="6" fill="#080c30"/><rect x="258" y="610.5" width="27.5" height="3.0" fill="#080c30"/><rect x="285.5" y="639" width="28.5" height="6" fill="#080c30"/><rect x="311.5" y="610.5" width="28.0" height="3.0" fill="#080c30"/><rect x="323" y="608" width="16.5" height="5.5" fill="#080c30"/><rect x="339.5" y="620" width="26.5" height="6" fill="#080c30"/><rect x="366" y="628" width="28.5" height="6" fill="#080c30"/><rect x="394.5" y="600" width="26.5" height="5.5" fill="#080c30"/><rect x="421" y="620" width="28" height="6" fill="#080c30"/></svg>
<div class="t" style="left:236px;top:536px;font-size:10.5px;color:#0a0e20;font-weight:bold;">Saurus</div>
<div class="t" style="left:236px;top:598px;font-size:10.5px;color:#fff;font-weight:bold;">VPS Avenger 01</div>
<div style="left:231px;top:37px;width:1px;height:641px;background:#e06a4a"></div>
<div style="left:448px;top:37px;width:1px;height:641px;background:#e06a4a"></div>
<div style="left:447px;top:103px;width:2px;height:15px;background:#8a1418"></div>
<div style="left:12px;top:0px;width:1px;height:17px;background:#7a8088"></div>
<div style="left:15px;top:0px;width:1px;height:17px;background:#7a8088"></div>
<div style="left:12px;top:17px;width:1px;height:661px;background:#f6f8fa"></div>
<div style="left:15px;top:17px;width:1px;height:661px;background:#f6f8fa"></div>
<div style="left:13px;top:0px;width:2px;height:678px;background:#323436"></div>
</div>
</body></html>
